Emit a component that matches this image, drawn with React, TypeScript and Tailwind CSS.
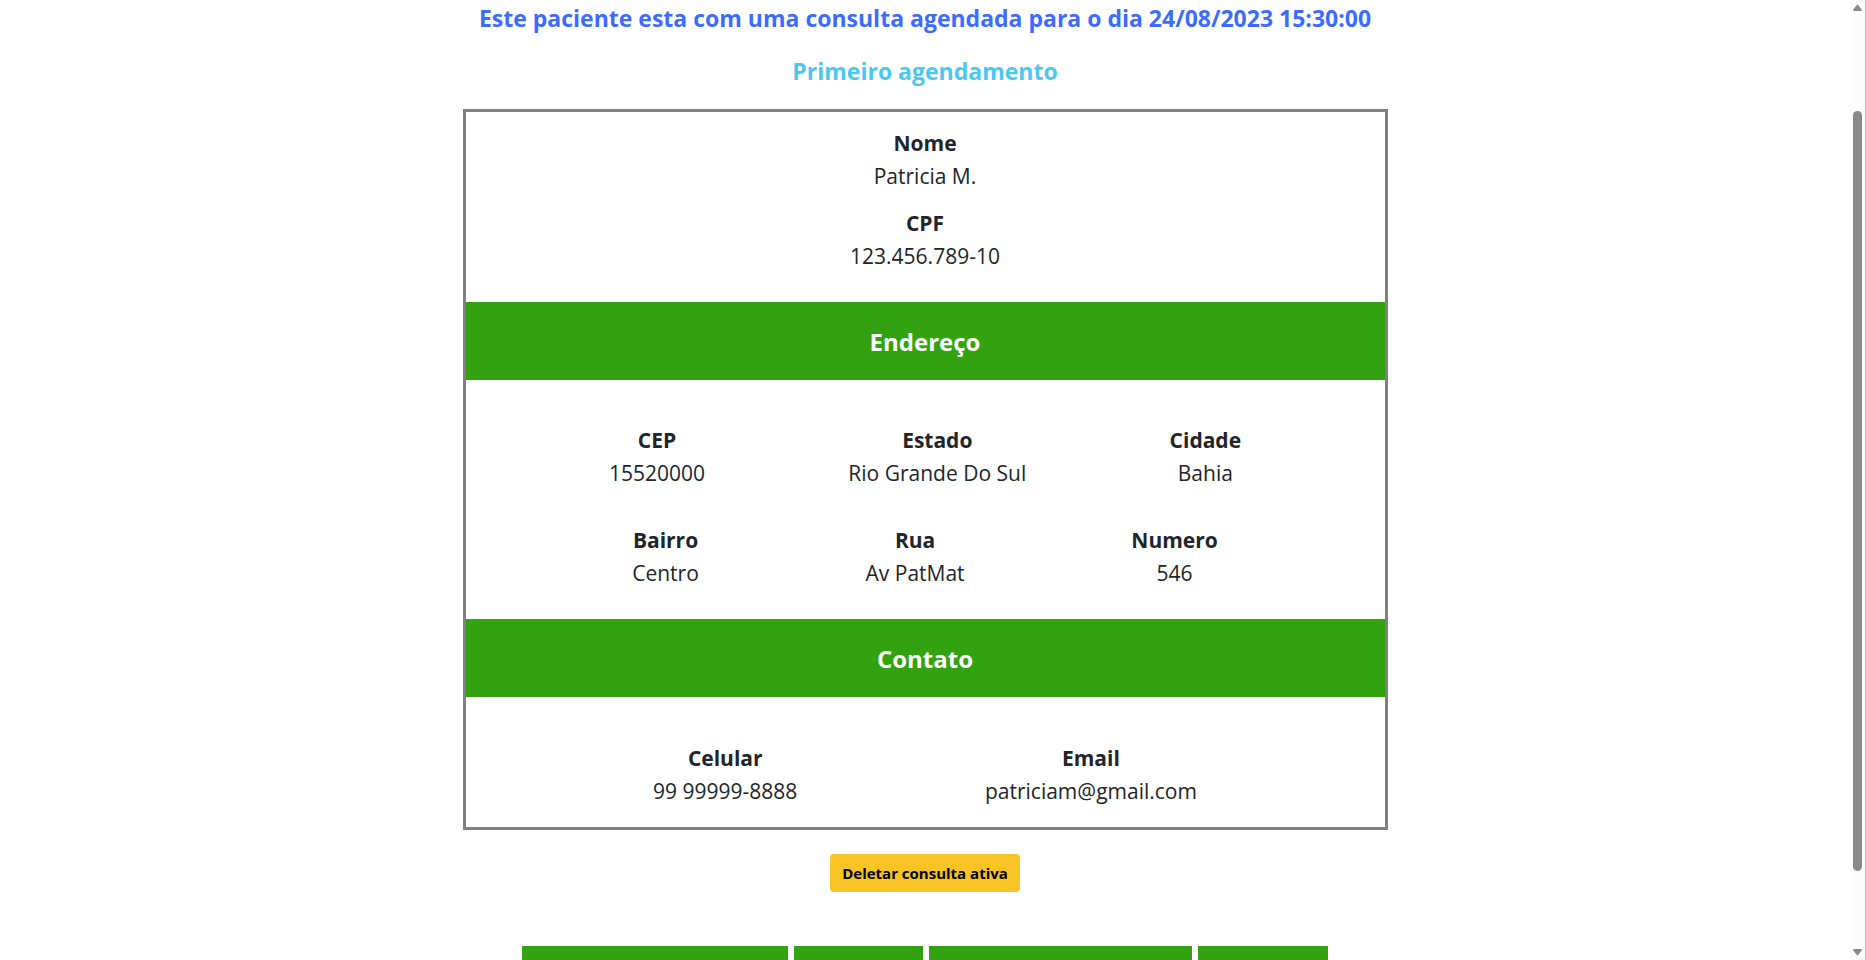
type FieldData = { label: string; value: string };

const identity: FieldData[] = [
  { label: "Nome", value: "Patricia M." },
  { label: "CPF", value: "123.456.789-10" },
];

const region: FieldData[] = [
  { label: "CEP", value: "15520000" },
  { label: "Estado", value: "Rio Grande Do Sul" },
  { label: "Cidade", value: "Bahia" },
];

const street: FieldData[] = [
  { label: "Bairro", value: "Centro" },
  { label: "Rua", value: "Av PatMat" },
  { label: "Numero", value: "546" },
];

const contact: FieldData[] = [
  { label: "Celular", value: "99 99999-8888" },
  { label: "Email", value: "patriciam@gmail.com" },
];

function Field({ label, value }: FieldData) {
  return (
    <div className="text-center text-[21px] leading-[33px]">
      <dt className="font-bold">{label}</dt>
      <dd>{value}</dd>
    </div>
  );
}

function FieldRow({ fields }: { fields: FieldData[] }) {
  return (
    <dl className="flex justify-evenly">
      {fields.map((field) => (
        <Field key={field.label} {...field} />
      ))}
    </dl>
  );
}

function Band({ title }: { title: string }) {
  return (
    <h3 className="bg-[#32a211] pt-[25px] pb-[23px] text-center text-2xl leading-[30px] font-bold text-white">
      {title}
    </h3>
  );
}

function Scrollbar() {
  return (
    <div
      aria-hidden="true"
      className="flex w-4 shrink-0 flex-col items-center border-r border-[#b5b5b5] bg-[#fcfcfc] py-1"
    >
      <svg className="h-2 w-[9px]" viewBox="0 0 9 8">
        <path d="M4.5 0.2 L8.8 5.6 Q9 7 8 7 L1 7 Q0 7 0.2 5.6 Z" fill="#8a8a8a" />
      </svg>
      <div className="flex w-full flex-1 flex-col items-center pt-[99px] pb-[77px]">
        <div className="w-[9px] flex-1 rounded-full bg-[#8a8a8a]" />
      </div>
      <svg className="h-2 w-[9px]" viewBox="0 0 9 8">
        <path d="M4.5 7.8 L8.8 2.4 Q9 1 8 1 L1 1 Q0 1 0.2 2.4 Z" fill="#8a8a8a" />
      </svg>
    </div>
  );
}

export default function App() {
  return (
    <div className="flex h-screen bg-white font-['Open_Sans','Noto_Sans',sans-serif] text-[#212529]">
      <main className="flex min-w-0 flex-1 flex-col items-center overflow-hidden pt-1">
        <h1 className="text-center text-[23px] leading-[29px] font-bold text-[#3d6bff]">
          Este paciente esta com uma consulta agendada para o dia 24/08/2023 15:30:00
        </h1>
        <h2 className="mt-6 text-center text-[23px] leading-[29px] font-bold text-[#4ac8f0]">
          Primeiro agendamento
        </h2>

        <section className="mt-[23px] w-1/2 shrink-0 border-3 border-[#808080]">
          <dl className="flex flex-col gap-[14px] pt-[15px] pb-[29px]">
            {identity.map((field) => (
              <Field key={field.label} {...field} />
            ))}
          </dl>
          <Band title="Endereço" />
          <div className="flex flex-col gap-[34px] pt-11 pb-[29px]">
            <FieldRow fields={region} />
            <FieldRow fields={street} />
          </div>
          <Band title="Contato" />
          <div className="pt-[45px] pb-[19px]">
            <FieldRow fields={contact} />
          </div>
        </section>

        <button
          type="button"
          className="mt-6 shrink-0 rounded bg-[#f7c325] px-3 py-[7px] text-[15px] leading-6 font-bold text-black"
        >
          Deletar consulta ativa
        </button>

        <div className="mt-[54px] grid w-[806px] max-w-full shrink-0 grid-cols-[266fr_129fr_263fr_130fr] gap-[6px]">
          <div className="h-12 bg-[#32a211]" />
          <div className="h-12 bg-[#32a211]" />
          <div className="h-12 bg-[#32a211]" />
          <div className="h-12 bg-[#32a211]" />
        </div>
      </main>
      <Scrollbar />
    </div>
  );
}
